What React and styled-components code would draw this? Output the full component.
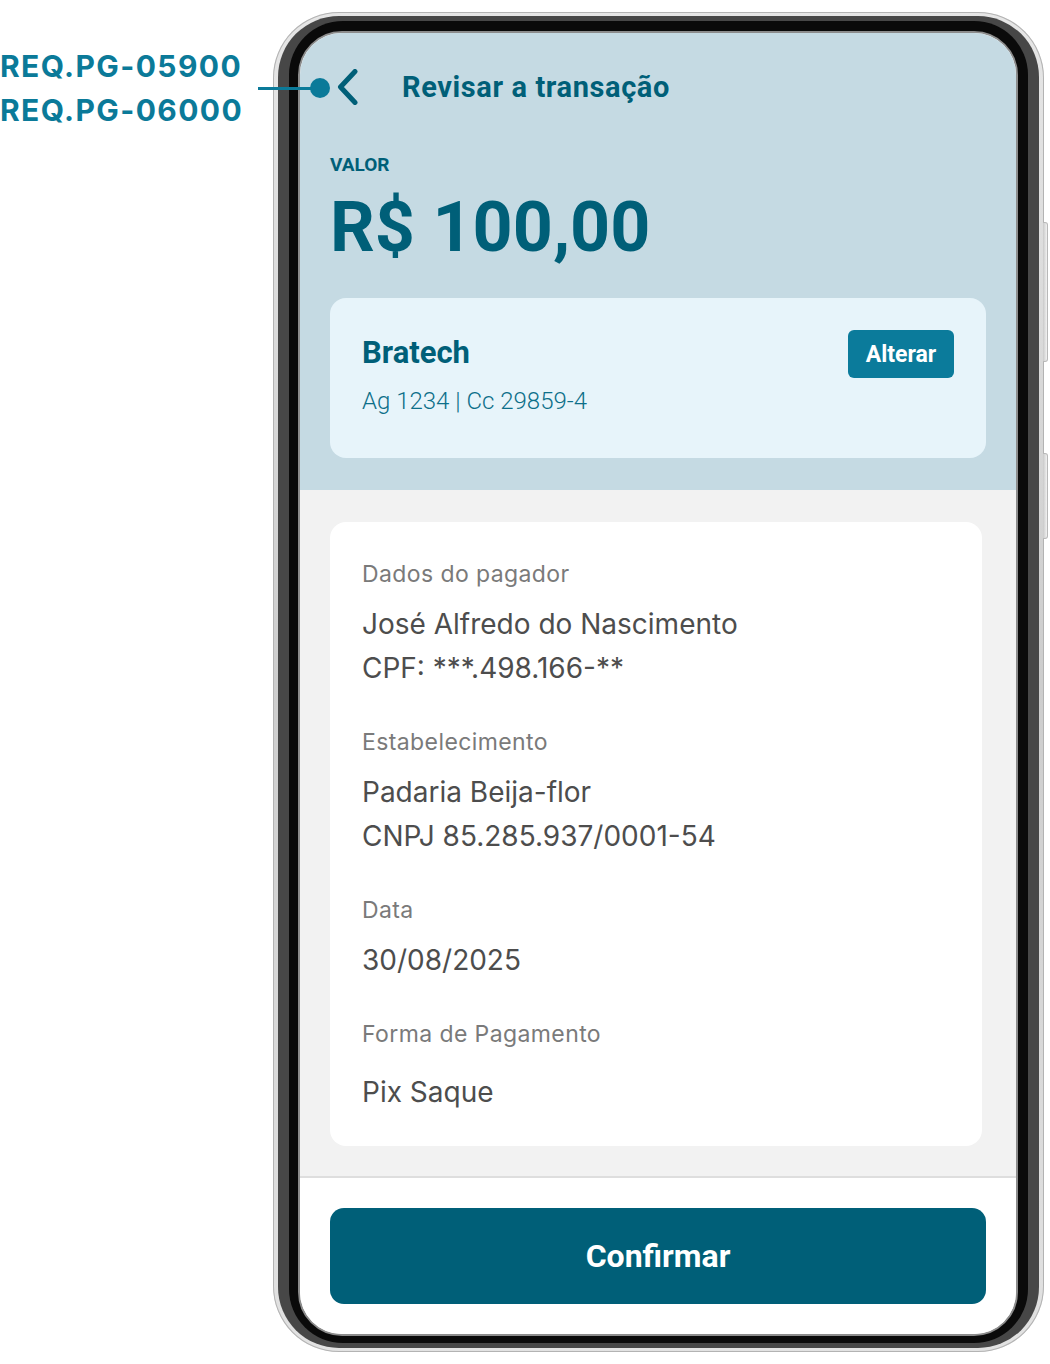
import React from 'react';
import styled, { createGlobalStyle } from 'styled-components';

const GlobalStyle = createGlobalStyle`
  html, body {
    margin: 0;
    padding: 0;
    background: #ffffff;
  }
  * {
    box-sizing: border-box;
  }
`;

const Canvas = styled.div`
  position: relative;
  display: grid;
  grid-template-columns: 273px 771px;
  width: 1050px;
  height: 1364px;
  padding-top: 12px;
  overflow: hidden;
`;

const Annotation = styled.div`
  margin-top: 32px;
  font-family: Inter, 'Liberation Sans', sans-serif;
  font-weight: 700;
  font-size: 30px;
  line-height: 44px;
  letter-spacing: 1.4px;
  color: #0b7a99;
`;

const Pointer = styled.div`
  position: absolute;
  left: 258px;
  top: 78px;
  display: flex;
  align-items: center;
  z-index: 2;
`;

const PointerLine = styled.div`
  width: 54px;
  height: 3px;
  background: #0b7a99;
`;

const PointerDot = styled.div`
  width: 20px;
  height: 20px;
  border-radius: 50%;
  background: #0b7a99;
  margin-left: -2px;
`;

const Phone = styled.div`
  position: relative;
  width: 771px;
  height: 1340px;
  border-radius: 66px;
  padding: 4px 5px;
  background: linear-gradient(180deg, #e6e6e6 0%, #cdcdcd 50%, #e2e2e2 100%);
  box-shadow: inset 0 0 0 1px #b3b3b3;
`;

const SideButton = styled.div`
  position: absolute;
  right: -4px;
  top: ${(p) => p.$top}px;
  width: 5px;
  height: ${(p) => p.$height}px;
  border-radius: 0 3px 3px 0;
  background: linear-gradient(90deg, #c9c9c9, #f2f2f2);
  border: 1px solid #b8b8b8;
  border-left: none;
`;

const Bezel = styled.div`
  height: 100%;
  border-radius: 61px;
  padding: 5px 11px;
  background: #474747;
`;

const Rim = styled.div`
  height: 100%;
  border-radius: 54px;
  padding: 10px 10px 7px 9px;
  background: #0a0a0a;
`;

const Screen = styled.div`
  height: 100%;
  display: flex;
  flex-direction: column;
  border-radius: 44px;
  border: 2px solid #8c8c8c;
  overflow: hidden;
  background: #ffffff;
  font-family: Roboto, 'Liberation Sans', sans-serif;
`;

const Header = styled.header`
  background: #c5dae3;
  padding: 30px 30px 32px;
  height: 457px;
  flex-shrink: 0;
`;

const NavRow = styled.div`
  display: flex;
  align-items: center;
  height: 48px;
  margin-left: 6px;
  gap: 42px;
`;

const BackButton = styled.button`
  display: flex;
  align-items: center;
  padding: 0;
  border: none;
  background: none;
  color: #005f78;
`;

const Title = styled.h1`
  margin: 0;
  font-size: 29px;
  font-weight: 700;
  letter-spacing: 0.6px;
  color: #005f78;
`;

const AmountLabel = styled.div`
  margin-top: 42px;
  font-size: 19px;
  line-height: 24px;
  font-weight: 700;
  color: #005f78;
`;

const Amount = styled.div`
  margin-top: 10px;
  font-size: 70px;
  line-height: 80px;
  font-weight: 700;
  color: #005f78;
`;

const BankCard = styled.div`
  margin-top: 31px;
  height: 160px;
  padding: 32px 32px 0;
  border-radius: 16px;
  background: #e7f4fa;
`;

const BankRow = styled.div`
  display: flex;
  align-items: center;
  justify-content: space-between;
`;

const BankName = styled.div`
  font-size: 31px;
  line-height: 40px;
  margin-top: -3px;
  font-weight: 700;
  color: #005f78;
`;

const SmallButton = styled.button`
  width: 106px;
  height: 48px;
  border: none;
  border-radius: 6px;
  background: #0b7b9b;
  color: #ffffff;
  font-family: Roboto, 'Liberation Sans', sans-serif;
  font-size: 23px;
  font-weight: 700;
`;

const BankAccount = styled.div`
  margin-top: 7px;
  font-size: 24px;
  line-height: 32px;
  font-weight: 300;
  color: #0d6f89;
`;

const Body = styled.main`
  flex: 1;
  background: #f2f2f2;
  padding: 32px 34px 30px 30px;
  border-bottom: 2px solid #dedede;
`;

const DetailsCard = styled.section`
  height: 624px;
  padding: 37px 32px 0;
  border-radius: 16px;
  background: #ffffff;
  font-family: Inter, 'Liberation Sans', sans-serif;
  display: flex;
  flex-direction: column;
  gap: 37px;
`;

const Field = styled.div`
  display: flex;
  flex-direction: column;
  gap: ${(p) => p.$gap || 13}px;
`;

const FieldLabel = styled.div`
  font-size: 23px;
  line-height: 30px;
  letter-spacing: 0.4px;
  color: #7a7a7a;
`;

const FieldValue = styled.div`
  font-size: 28px;
  line-height: 44px;
  color: #4d4d4d;
`;

const Footer = styled.footer`
  background: #ffffff;
  padding: 30px 30px 30px;
  flex-shrink: 0;
`;

const PrimaryButton = styled.button`
  width: 100%;
  height: 96px;
  border: none;
  border-radius: 14px;
  background: #005f78;
  color: #ffffff;
  font-family: Roboto, 'Liberation Sans', sans-serif;
  font-size: 32px;
  font-weight: 700;
`;

const fields = [
  { label: 'Dados do pagador', values: ['José Alfredo do Nascimento', 'CPF: ***.498.166-**'] },
  { label: 'Estabelecimento', values: ['Padaria Beija-flor', 'CNPJ 85.285.937/0001-54'] },
  { label: 'Data', values: ['30/08/2025'] },
  { label: 'Forma de Pagamento', values: ['Pix Saque'], gap: 21 },
];

const ChevronLeft = () => (
  <svg width="24" height="36" viewBox="0 0 24 36" fill="none">
    <path d="M19 2.5 L4.5 18 L19 33.5" stroke="currentColor" strokeWidth="5" strokeLinecap="round" strokeLinejoin="round" />
  </svg>
);

const App = () => {
  return (
    <>
      <GlobalStyle />
      <Canvas>
        <Annotation>
          <div>REQ.PG-05900</div>
          <div>REQ.PG-06000</div>
        </Annotation>
        <Pointer>
          <PointerLine />
          <PointerDot />
        </Pointer>
        <Phone>
          <SideButton $top={210} $height={140} />
          <SideButton $top={441} $height={86} />
          <Bezel>
            <Rim>
              <Screen>
                <Header>
                  <NavRow>
                    <BackButton aria-label="Voltar">
                      <ChevronLeft />
                    </BackButton>
                    <Title>Revisar a transação</Title>
                  </NavRow>
                  <AmountLabel>VALOR</AmountLabel>
                  <Amount>R$ 100,00</Amount>
                  <BankCard>
                    <BankRow>
                      <BankName>Bratech</BankName>
                      <SmallButton>Alterar</SmallButton>
                    </BankRow>
                    <BankAccount>Ag 1234 | Cc 29859-4</BankAccount>
                  </BankCard>
                </Header>
                <Body>
                  <DetailsCard>
                    {fields.map((f) => (
                      <Field key={f.label} $gap={f.gap}>
                        <FieldLabel>{f.label}</FieldLabel>
                        <div>
                          {f.values.map((v) => (
                            <FieldValue key={v}>{v}</FieldValue>
                          ))}
                        </div>
                      </Field>
                    ))}
                  </DetailsCard>
                </Body>
                <Footer>
                  <PrimaryButton>Confirmar</PrimaryButton>
                </Footer>
              </Screen>
            </Rim>
          </Bezel>
        </Phone>
      </Canvas>
    </>
  );
};

export default App;
